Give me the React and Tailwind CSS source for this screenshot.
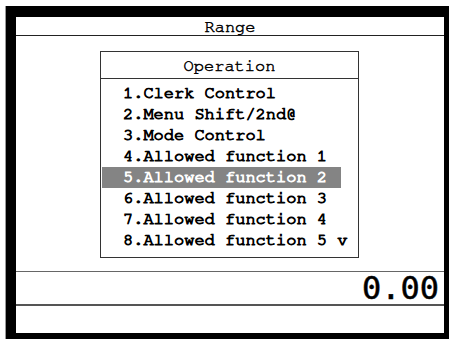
const ITEMS = [
  "1.Clerk Control",
  "2.Menu Shift/2nd@",
  "3.Mode Control",
  "4.Allowed function 1",
  "5.Allowed function 2",
  "6.Allowed function 3",
  "7.Allowed function 4",
  "8.Allowed function 5 v",
];

const SELECTED = 4;

// FreeMono has only a light face here; a text stroke thickens it
const mono = { fontFamily: '"FreeMono", "Liberation Mono", monospace' };

export default function App() {
  return (
    <div className="h-[340px] w-[449px] overflow-hidden bg-white pl-[5px] pt-[6px]">
      <div className="flex h-[333px] w-[444px] flex-col border-l border-[#9a9a9a] bg-black pb-[6px] pl-[10px] pr-[5px] pt-[11px]">
        <div className="flex flex-1 flex-col bg-white">
          <div
            className="flex h-[19px] items-center justify-center border-b border-[#222] text-[17px] leading-[17px] text-black [-webkit-text-stroke:0.5px_currentColor]"
            style={mono}
          >
            Range
          </div>

          <div className="h-[235px] pl-[84px] pt-[15px]">
            <div className="flex h-[207px] w-[259px] flex-col border border-[#333]">
              <div
                className="flex h-[27px] items-end justify-center border-b border-[#333] pb-[2px] text-[17px] leading-[21px] text-black [-webkit-text-stroke:0.5px_currentColor]"
                style={mono}
              >
                Operation
              </div>
              <div className="flex flex-col pt-[4px]">
                {ITEMS.map((item, i) => (
                  <div
                    key={item}
                    className={`ml-[1px] h-[21px] w-[239px] whitespace-pre pl-[21px] text-[17px] leading-[20px] [-webkit-text-stroke:1px_currentColor] ${
                      i === SELECTED ? "bg-[#848484] text-white" : "text-black"
                    }`}
                    style={mono}
                  >
                    {item}
                  </div>
                ))}
              </div>
            </div>
          </div>

          <div className="h-[1px] bg-[#666]" />
          <div
            className="flex h-[32px] items-center justify-end pr-[5px] text-[32px] leading-none text-black [-webkit-text-stroke:0.5px_currentColor]"
            style={{ fontFamily: '"DejaVu Sans Mono", monospace' }}
          >
            0.00
          </div>
          <div className="h-[2px] bg-[#555]" />
          <div className="flex-1" />
        </div>
      </div>
    </div>
  );
}
